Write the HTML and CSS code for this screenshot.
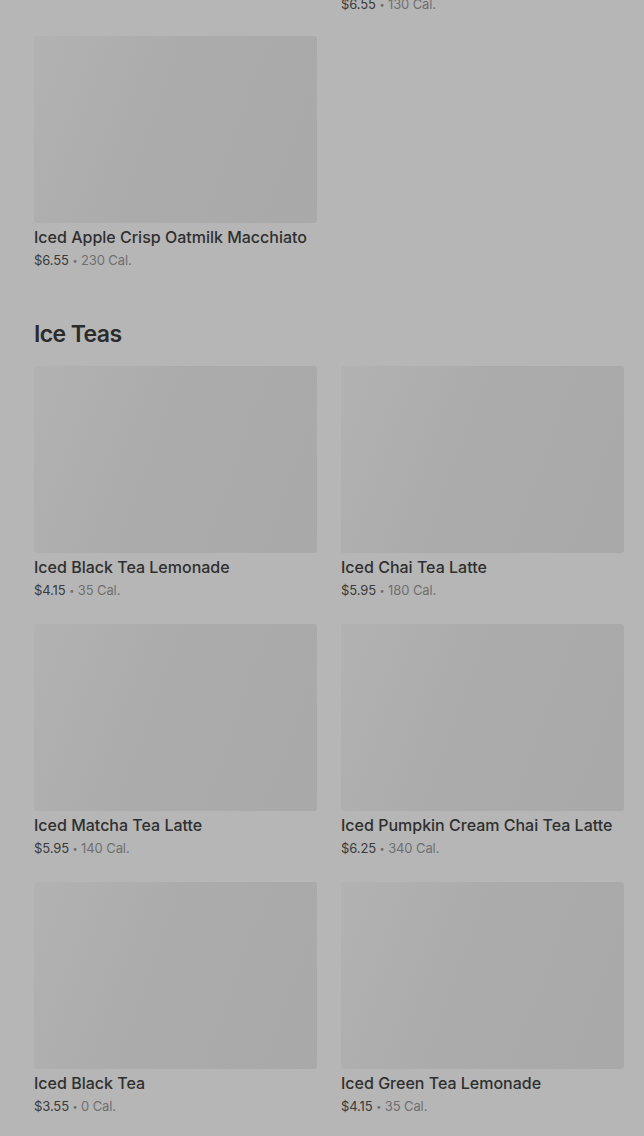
FILE: index.html
```html
<!DOCTYPE html>
<html lang="en">
<head>
  <meta charset="UTF-8">
  <meta name="viewport" content="width=device-width, initial-scale=1.0">
  <title>Menu - Cold Drinks</title>
  <link rel="stylesheet" href="styles.css">
</head>
<body>
  <main class="menu">
    <section class="category category-top">
      <div class="grid">
        <div class="item item-tail"></div>
        <div class="item item-tail">
          <p class="meta"><span class="price">$6.55</span> <span class="dot">&bull;</span> <span class="cal">130 Cal.</span></p>
        </div>
        <div class="item">
          <div class="thumb"></div>
          <h3 class="name">Iced Apple Crisp Oatmilk Macchiato</h3>
          <p class="meta"><span class="price">$6.55</span> <span class="dot">&bull;</span> <span class="cal">230 Cal.</span></p>
        </div>
      </div>
    </section>

    <section class="category">
      <h2 class="category-title">Ice Teas</h2>
      <div class="grid">
        <div class="item">
          <div class="thumb"></div>
          <h3 class="name">Iced Black Tea Lemonade</h3>
          <p class="meta"><span class="price">$4.15</span> <span class="dot">&bull;</span> <span class="cal">35 Cal.</span></p>
        </div>
        <div class="item">
          <div class="thumb"></div>
          <h3 class="name">Iced Chai Tea Latte</h3>
          <p class="meta"><span class="price">$5.95</span> <span class="dot">&bull;</span> <span class="cal">180 Cal.</span></p>
        </div>
        <div class="item">
          <div class="thumb"></div>
          <h3 class="name">Iced Matcha Tea Latte</h3>
          <p class="meta"><span class="price">$5.95</span> <span class="dot">&bull;</span> <span class="cal">140 Cal.</span></p>
        </div>
        <div class="item">
          <div class="thumb"></div>
          <h3 class="name">Iced Pumpkin Cream Chai Tea Latte</h3>
          <p class="meta"><span class="price">$6.25</span> <span class="dot">&bull;</span> <span class="cal">340 Cal.</span></p>
        </div>
        <div class="item">
          <div class="thumb"></div>
          <h3 class="name">Iced Black Tea</h3>
          <p class="meta"><span class="price">$3.55</span> <span class="dot">&bull;</span> <span class="cal">0 Cal.</span></p>
        </div>
        <div class="item">
          <div class="thumb"></div>
          <h3 class="name">Iced Green Tea Lemonade</h3>
          <p class="meta"><span class="price">$4.15</span> <span class="dot">&bull;</span> <span class="cal">35 Cal.</span></p>
        </div>
      </div>
    </section>
  </main>
</body>
</html>
```

FILE: styles.css
```css
body {
  margin: 0;
  background: #b6b6b6;
  font-family: Inter, "Liberation Sans", sans-serif;
  color: #2e2e2e;
}
.menu {
  padding: 0 20px 0 34px;
}
.category-top {
  margin-top: -5px;
}
.category-top .grid {
  row-gap: 22px;
}
.category-title {
  margin: 48px 0 16px;
  font-size: 23px;
  line-height: 32px;
  font-weight: 600;
  letter-spacing: -0.6px;
  color: #2b2b2b;
}
.grid {
  display: grid;
  grid-template-columns: 283px 283px;
  column-gap: 24px;
  row-gap: 24px;
}
.thumb {
  height: 187px;
  border-radius: 3px;
  background: linear-gradient(110deg, #b2b2b2 0%, #ababab 45%, #a9a9a9 100%);
}
.name {
  margin: 3px 0 0;
  font-size: 16px;
  line-height: 22px;
  font-weight: 500;
  color: #2f2f2f;
}
.meta {
  margin: 3px 0 0;
  font-size: 13px;
  line-height: 18px;
  letter-spacing: -0.1px;
}
.price {
  color: #3a3a3a;
}
.dot {
  font-size: 9px;
  vertical-align: 1px;
  color: #6f6f6f;
}
.cal {
  color: #6f6f6f;
}
.item-tail .meta {
  margin: 0;
}
```
